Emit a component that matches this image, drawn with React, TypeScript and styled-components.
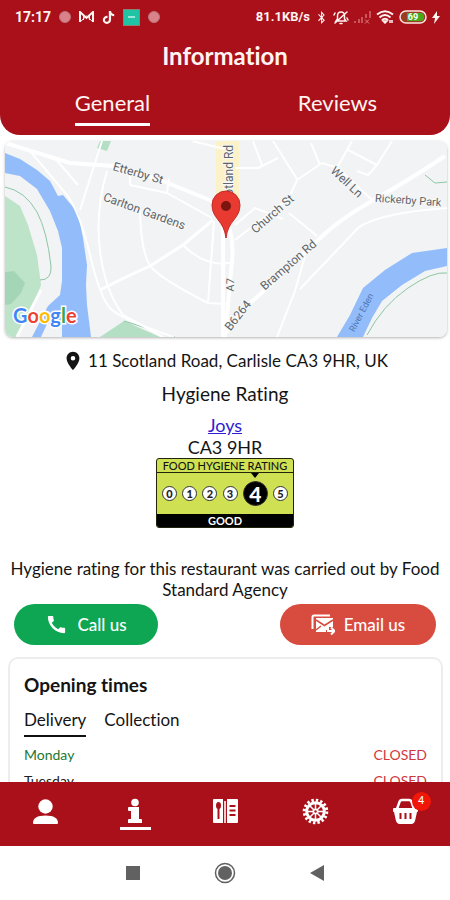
import React, { useState } from "react";
import styled, { createGlobalStyle } from "styled-components";
import { FaBluetoothB, FaTiktok } from "react-icons/fa";
import { MdCall, MdLocationOn } from "react-icons/md";

const GlobalStyle = createGlobalStyle`
  * { box-sizing: border-box; }
  body { margin: 0; background: #fff; color: #141414; font-family: Lato, "Open Sans", sans-serif; font-variant-ligatures: none; }
  button { font: inherit; font-variant-ligatures: none; color: inherit; background: none; border: 0; padding: 0; cursor: pointer; }
`;

const red = "#a91019";

const Screen = styled.div`
  display: flex;
  flex-direction: column;
  height: 100vh;
  overflow: hidden;
`;

const Header = styled.header`
  flex: none;
  background: ${red};
  color: #fff4f2;
  border-radius: 0 0 20px 20px;
  padding-bottom: 9px;
`;

const StatusBar = styled.div`
  display: flex;
  align-items: center;
  justify-content: space-between;
  height: 34px;
  padding: 0 10px 0 15px;
  font: 700 13px/16px Roboto, sans-serif;
`;

const StatusGroup = styled.div<{ $gap: number }>`
  display: flex;
  align-items: center;
  gap: ${(p) => p.$gap}px;
  svg { display: block; flex: none; }
`;

const Clock = styled.time`
  font-size: 14px;
`;

const Bubble = styled.span`
  width: 12px;
  height: 12px;
  border-radius: 50%;
  background: #d9828a;
  border: 1px solid #b9767c;
`;

const TealTile = styled.span`
  display: grid;
  place-items: center;
  width: 17px;
  height: 17px;
  background: #1fc4a4;
  border: 1px solid #8b8272;
  &::after { content: ""; width: 7px; height: 2px; background: #9be8d8; }
`;

const Title = styled.h1`
  margin: 7px 0 0;
  text-align: center;
  font-size: 24px;
  line-height: 30px;
  font-weight: 700;
`;

const HeaderTabs = styled.div`
  display: grid;
  grid-template-columns: 1fr 1fr;
  justify-items: center;
  margin-top: 18px;
`;

const HeaderTab = styled.button<{ $active: boolean }>`
  font-size: 22px;
  line-height: 28px;
  padding-bottom: 6px;
  border-bottom: 3px solid ${(p) => (p.$active ? "#fff" : "transparent")};
`;

const Content = styled.main`
  flex: 1;
  min-height: 0;
  overflow-y: auto;
  scrollbar-width: none;
  padding-top: 6px;
`;

const MapCard = styled.div`
  margin: 0 3px 0 5px;
  height: 196px;
  border-radius: 8px;
  overflow: hidden;
  box-shadow: 0 1px 3px rgba(0, 0, 0, 0.3);
  svg { display: block; width: 100%; height: 100%; }
`;

const Address = styled.p`
  display: flex;
  align-items: center;
  justify-content: center;
  gap: 4px;
  margin: 13px 0 0;
  font-size: 17px;
  line-height: 22px;
`;

const Hygiene = styled.section`
  text-align: center;
  font-size: 18px;
  line-height: 22px;
`;

const HygieneTitle = styled.h2`
  margin: 11px 0 9px;
  font-size: 19px;
  line-height: 22px;
  font-weight: 400;
`;

const PlaceLink = styled.a`
  display: block;
  color: #2d1ed2;
`;

const Rating = styled.div`
  width: 138px;
  margin: 0 auto;
  background: #cfe153;
  border: 1px solid #20240a;
  border-radius: 3px;
  overflow: hidden;
`;

const RatingHead = styled.div`
  height: 14px;
  border-bottom: 1px solid #20240a;
  font: 500 11px/14px Lato, sans-serif;
  white-space: nowrap;
`;

const RatingScale = styled.ol`
  display: flex;
  align-items: center;
  justify-content: space-between;
  margin: 0;
  padding: 0 5px;
  height: 41px;
  list-style: none;
`;

const Score = styled.li<{ $active: boolean }>`
  position: relative;
  display: grid;
  place-items: center;
  width: ${(p) => (p.$active ? 25 : 15)}px;
  height: ${(p) => (p.$active ? 25 : 15)}px;
  border-radius: 50%;
  border: 1px solid #333;
  background: ${(p) => (p.$active ? "#000" : "#fff")};
  color: ${(p) => (p.$active ? "#fff" : "#222")};
  font: 900 ${(p) => (p.$active ? 21 : 11)}px/1 Lato, sans-serif;
`;

const Pointer = styled.span`
  position: absolute;
  top: -9px;
  left: 50%;
  margin-left: -4px;
  border: 4px solid transparent;
  border-top: 5px solid #000;
  border-bottom: 0;
`;

const RatingFoot = styled.div`
  background: #000;
  color: #fff;
  font: 700 11px/13px Lato, sans-serif;
`;

const Note = styled.p`
  margin: 30px 8px 4px;
  font-size: 17px;
  line-height: 21px;
  text-align: center;
`;

const Actions = styled.div`
  display: flex;
  justify-content: space-between;
  padding: 0 14px;
`;

const ActionButton = styled.button<{ $tone: string; $wide?: boolean }>`
  && {
    display: flex;
    align-items: center;
    justify-content: center;
    gap: 9px;
    width: ${(p) => (p.$wide ? 156 : 144)}px;
    height: 41px;
    border-radius: 21px;
    background: ${(p) => p.$tone};
    color: #fff;
    font-size: 17px;
    font-weight: 500;
  }
`;

const TimesCard = styled.section`
  margin: 12px 7px 12px 8px;
  padding: 14px 14px 10px;
  border: 2px solid #ededed;
  border-radius: 10px;
`;

const TimesTitle = styled.h2`
  margin: 0;
  font-size: 19px;
  line-height: 24px;
  font-weight: 700;
`;

const TimesTabs = styled.div`
  display: flex;
  gap: 18px;
  margin: 13px 0 5px;
`;

const TimesTab = styled.button<{ $active: boolean }>`
  font-size: 17px;
  line-height: 20px;
  padding-bottom: 5px;
  border-bottom: 2px solid ${(p) => (p.$active ? "#111" : "transparent")};
`;

const Hours = styled.table`
  width: 100%;
  border-collapse: collapse;
  font-size: 14px;
  line-height: 20px;
`;

const Day = styled.th<{ $today: boolean }>`
  padding: 3px 0;
  text-align: left;
  font-weight: 400;
  color: ${(p) => (p.$today ? "#23772f" : "#222")};
`;

const State = styled.td`
  padding: 3px 0;
  text-align: right;
  color: #d0383c;
`;

const BottomNav = styled.nav`
  flex: none;
  display: grid;
  grid-template-columns: repeat(5, 1fr);
  justify-items: center;
  align-items: start;
  height: 64px;
  padding-top: 14px;
  background: ${red};
  color: #fff;
`;

const NavButton = styled.button<{ $active?: boolean }>`
  position: relative;
  width: 31px;
  height: 34px;
  border-bottom: 3px solid ${(p) => (p.$active ? "#fff" : "transparent")};
  svg { display: block; margin: 0 auto; }
`;

const Count = styled.span`
  position: absolute;
  top: -4px;
  right: -10px;
  width: 19px;
  height: 19px;
  border-radius: 50%;
  background: #f01709;
  color: #fff;
  font: 400 11px/18px Roboto, sans-serif;
  text-align: center;
`;

const SystemNav = styled.div`
  flex: none;
  display: flex;
  justify-content: center;
  align-items: center;
  gap: 74px;
  height: 54px;
  background: #fff;
  color: #616161;
  button, svg { display: block; }
`;

const MapDrawing = () => (
  <svg viewBox="0 0 442 196" preserveAspectRatio="xMidYMid slice" role="img" aria-label="Map of Scotland Road, Carlisle">
    <rect width="442" height="196" fill="#f1f3f4" />
    <path d="M0 55 15 65 23 84 32 114 36 144 28 167 12 196H0Z" fill="#bde4c9" />
    <path d="M0 131 9 130 20 142 16 152 6 163 0 164Z" fill="#a5d5b7" />
    <path d="M95 0H106L102 10 92 7ZM95 196 119 180 155 196Z" fill="#b5dfc4" />
    <path d="M0 12 15 18 32 29 45 40 53 55 58 54 73 72 78 97 82 124 81 144 82 164 86 196H57V180L42 183 36 196H27L43 165 55 154 57 140V107L53 90 45 70 32 48 15 35 0 32Z" fill="#93bcfb" />
    <path d="M332 196 345 174 358 147 380 129 407 112 442 107V125L420 130 397 144 377 160 367 177 358 196Z" fill="#93bcfb" />
    <g fill="none" stroke="#8cc6a5" strokeWidth="1">
      <path d="M0 46Q20 50 32 71Q42 90 46 125Q47 139 35 139" />
      <path d="M362 194Q378 164 403 147T442 132M420 34 430 42 442 41M119 180 170 196" />
    </g>
    <path d="M211 0H234V62H211Z" fill="#fbf2c9" />
    <g fill="none" stroke="#fff" strokeWidth="4" strokeLinejoin="round">
      <path d="M0 2 65 22 108 25 158 40 207 60 218 78V196" />
      <path d="M220 77Q231 97 226 130L223 164 220 196" />
      <path d="M217 196 243 164 270 140 312 100Q333 79 367 60T440 15" />
      <path d="M95 149Q120 136 145 125L178 104 208 79" strokeWidth="3" />
      <path d="M36 149 12 196" strokeWidth="3" />
    </g>
    <g fill="none" stroke="#fff" strokeWidth="2" strokeLinejoin="round">
      <path d="M25 10 62 54Q75 72 85 114T105 167 169 196M102 30Q90 70 95 110T118 174L158 196M97 0 75 69M48 15 73 44M125 44 162 52 207 77M125 44V35M162 52 164 38" />
      <path d="M135 69Q136 115 147 127T203 162L221 163M178 104Q196 123 221 123M209 80 203 162M187 0 220 8" />
      <path d="M230 99 284 57 292 39 317 22 333 27 367 59M230 27H253L273 17M268 0 292 38M248 0 257 24M306 2 315 24M347 0 333 25M343 9 372 24 387 0M352 30 363 34 372 24M284 72 312 95M230 84 250 67 278 78M272 196 290 150 300 115M295 148 353 87Q373 72 442 67M220 122H228" />
    </g>
    <g fontFamily="Roboto, sans-serif" fontSize="12" fill="#60656a" textAnchor="middle" stroke="#f7f8f8" strokeWidth="2" paintOrder="stroke">
      <text transform="translate(132 36) rotate(16)">Etterby St</text>
      <text transform="translate(138 74) rotate(20)">Carlton Gardens</text>
      <text transform="translate(270 76) rotate(-41)">Church St</text>
      <text transform="translate(339 44) rotate(43)">Well Ln</text>
      <text transform="translate(403 63) rotate(4)" fontSize="11">Rickerby Park</text>
      <text transform="translate(286 127) rotate(-41)">Brampton Rd</text>
      <text transform="translate(229 144) rotate(-87)" fontSize="11">A7</text>
      <text transform="translate(236 177) rotate(-52)">B6264</text>
      <text transform="translate(228 36) rotate(-90)">Scotland Rd</text>
      <text transform="translate(359 173) rotate(-62)" fontSize="9" fill="#4d78b4" stroke="none">River Eden</text>
    </g>
    <path d="M221 97C219 79 207 78 207 64A14 14 0 0 1 235 64C235 78 223 79 221 97Z" fill="#e93a32" stroke="#c42a24" strokeWidth="1" />
    <circle cx="221" cy="65" r="5" fill="#7a1510" />
    <text x="8" y="182" fontFamily="Lato, sans-serif" fontSize="20" fontWeight="700" stroke="#fff" strokeWidth="3" paintOrder="stroke">
      <tspan fill="#4285f4">G</tspan><tspan fill="#ea4335">o</tspan><tspan fill="#fbbc05">o</tspan><tspan fill="#4285f4">g</tspan><tspan fill="#34a853">l</tspan><tspan fill="#ea4335">e</tspan>
    </text>
  </svg>
);

const MailBadgeIcon = () => (
  <svg width="15" height="12" viewBox="0 0 15 12" fill="none" stroke="currentColor">
    <path d="M1 11V1L7.500 7 14 1V11" strokeWidth="2" />
    <path d="M1 11 7.500 5 14 11M4.500 9V4M10.500 9V4" strokeWidth="1" />
  </svg>
);

const MutedBellIcon = () => (
  <svg width="16" height="15" viewBox="0 0 16 15" fill="none" stroke="currentColor" strokeWidth="1.5" strokeLinecap="round">
    <path d="M3 11H13L11.500 9V6Q11.500 2 8 2T4.500 6V9ZM7 13.500H9M2 13 14 2M2 3 1 5M14 8 15 10" />
  </svg>
);

const SignalIcon = () => (
  <svg width="17" height="13" viewBox="0 0 17 13" fill="#c9545b">
    <path d="M0 10H2V12H0ZM4 8H6V12H4ZM7 6H9V12H7ZM11 3H13V7H11ZM15 0H17V7H15Z" />
    <path d="M11 8.500 15 12.500M15 8.500 11 12.500" stroke="#d98084" />
  </svg>
);

const WifiIcon = () => (
  <svg width="18" height="14" viewBox="0 0 18 14" fill="none" stroke="currentColor" strokeWidth="2">
    <path d="M1 4.500Q9-2 17 4.500M3.500 7.500Q9 2.500 14.500 7.500M6 10Q9 7.500 12 10" />
    <path d="M7 11 9 13 11 11ZM14 10V13M16 10V13" strokeWidth="1.500" />
  </svg>
);

const BatteryIcon = () => (
  <svg width="28" height="14" viewBox="0 0 28 14">
    <rect x="1" y="1" width="26" height="12" rx="6" fill="#9a3d26" stroke="#ffe5df" strokeWidth="1.500" />
    <path d="M8 3H22Q25 3 25 7T22 11H8Z" fill="#4ba81c" />
    <text x="14" y="10" textAnchor="middle" fontFamily="Roboto, sans-serif" fontSize="9" fontWeight="700" fill="#fff">69</text>
  </svg>
);

const BoltIcon = () => (
  <svg width="8" height="13" viewBox="0 0 8 13" fill="currentColor"><path d="M5 0 0 7H3L2 13 8 5H5Z" /></svg>
);

const MailsIcon = () => (
  <svg width="24" height="22" viewBox="0 0 24 22" fill="none">
    <path d="M1.500 15V3Q1.500 1.500 3 1.500H19" stroke="#fff" strokeWidth="2" />
    <path d="M5 4H22V13H18V16H15V18H5Z" fill="#fff" />
    <path d="M5 6 13.500 11.500 22 6M5 16 10 12" stroke="#d84c3f" strokeWidth="1.500" />
    <path d="M16 17H23M20 13.500 23.500 17 20 20.500" stroke="#fff" strokeWidth="2" />
  </svg>
);

const PersonIcon = () => (
  <svg width="27" height="29" viewBox="0 0 27 29" fill="currentColor">
    <circle cx="13.500" cy="9.500" r="7.200" />
    <path d="M1 26Q1 18.500 13.500 18.500T26 26Q26 27 25 27H2Q1 27 1 26Z" />
  </svg>
);

const InfoIcon = () => (
  <svg width="16" height="29" viewBox="0 0 16 29" fill="currentColor">
    <circle cx="8" cy="5.500" r="3.800" />
    <path d="M2 10H12V22H14Q15 22 15 23V26H1V23Q1 22 2 22H4V14H2Q1 14 1 13V11Q1 10 2 10Z" />
  </svg>
);

const MenuIcon = () => (
  <svg width="27" height="29" viewBox="0 0 27 29" fill="none">
    <path d="M2 2H11V26H2Q1 26 1 25V3Q1 2 2 2ZM15 2H25Q26 2 26 3V25Q26 26 25 26H15Z" fill="#fff" />
    <path d="M13 4V26" stroke="#f2c9c9" strokeWidth="2" />
    <ellipse cx="6.500" cy="8.500" rx="2.500" ry="3.500" fill={red} />
    <path d="M6.500 10V22M17.500 9H23.500M17.500 13.500H23.500M17.500 18H23.500" stroke={red} strokeWidth="2" />
  </svg>
);

const GearIcon = () => (
  <svg width="27" height="29" viewBox="0 0 27 29" fill="none" stroke="currentColor">
    <circle cx="13.500" cy="14.500" r="8.800" strokeWidth="3" />
    <circle cx="13.500" cy="14.500" r="11.300" strokeWidth="3" strokeDasharray="2.400 2.037" />
    <path d="M13.500 6V23M5 14.500H22M7.500 8.500 19.500 20.500M19.500 8.500 7.500 20.500" strokeWidth="1.500" />
    <circle cx="13.500" cy="14.500" r="3" fill="currentColor" stroke="none" />
    <circle cx="13.500" cy="14.500" r="1.200" fill={red} stroke="none" />
  </svg>
);

const BasketIcon = () => (
  <svg width="27" height="29" viewBox="0 0 27 29" fill="none">
    <path d="M5 12 7.500 5Q8 3 10 3H17Q19 3 19.500 5L22 12" stroke="#fff" strokeWidth="2.500" />
    <path d="M2 11H25Q26 11 26 12V14Q26 15 25 15L23 24Q22 27 20 27H7Q5 27 4 24L2 15Q1 15 1 14V12Q1 11 2 11Z" fill="#fff" />
    <path d="M8.500 16V22M13.500 16V22M18.500 16V22" stroke={red} strokeWidth="2" />
  </svg>
);

const days = ["Monday", "Tuesday", "Wednesday", "Thursday", "Friday", "Saturday", "Sunday"];

export default function App() {
  const [page, setPage] = useState("General");
  const [service, setService] = useState("Delivery");
  return (
    <Screen>
      <GlobalStyle />
      <Header>
        <StatusBar>
          <StatusGroup $gap={8}>
            <Clock>17:17</Clock>
            <Bubble />
            <MailBadgeIcon />
            <FaTiktok size={13} />
            <TealTile />
            <Bubble />
          </StatusGroup>
          <StatusGroup $gap={5}>
            <span>81.1KB/s</span>
            <FaBluetoothB size={13} />
            <MutedBellIcon />
            <SignalIcon />
            <WifiIcon />
            <BatteryIcon />
            <BoltIcon />
          </StatusGroup>
        </StatusBar>
        <Title>Information</Title>
        <HeaderTabs role="tablist">
          {["General", "Reviews"].map((name) => (
            <HeaderTab key={name} role="tab" aria-selected={page === name} $active={page === name} onClick={() => setPage(name)}>
              {name}
            </HeaderTab>
          ))}
        </HeaderTabs>
      </Header>

      <Content>
        <MapCard><MapDrawing /></MapCard>
        <Address><MdLocationOn size={22} />11 Scotland Road, Carlisle CA3 9HR, UK</Address>
        <Hygiene>
          <HygieneTitle>Hygiene Rating</HygieneTitle>
          <PlaceLink href="#joys">Joys</PlaceLink>
          <div>CA3 9HR</div>
          <Rating>
            <RatingHead>FOOD HYGIENE RATING</RatingHead>
            <RatingScale>
              {[0, 1, 2, 3, 4, 5].map((n) => (
                <Score key={n} $active={n === 4}>{n === 4 && <Pointer />}{n}</Score>
              ))}
            </RatingScale>
            <RatingFoot>GOOD</RatingFoot>
          </Rating>
        </Hygiene>
        <Note>Hygiene rating for this restaurant was carried out by Food Standard Agency</Note>
        <Actions>
          <ActionButton $tone="#0fa653"><MdCall size={23} />Call us</ActionButton>
          <ActionButton $tone="#d84c3f" $wide><MailsIcon />Email us</ActionButton>
        </Actions>
        <TimesCard>
          <TimesTitle>Opening times</TimesTitle>
          <TimesTabs role="tablist">
            {["Delivery", "Collection"].map((name) => (
              <TimesTab key={name} role="tab" aria-selected={service === name} $active={service === name} onClick={() => setService(name)}>
                {name}
              </TimesTab>
            ))}
          </TimesTabs>
          <Hours>
            <tbody>
              {days.map((day, i) => (
                <tr key={day}>
                  <Day scope="row" $today={i === 0}>{day}</Day>
                  <State>CLOSED</State>
                </tr>
              ))}
            </tbody>
          </Hours>
        </TimesCard>
      </Content>

      <BottomNav>
        <NavButton aria-label="Account"><PersonIcon /></NavButton>
        <NavButton aria-label="Information" $active><InfoIcon /></NavButton>
        <NavButton aria-label="Menu"><MenuIcon /></NavButton>
        <NavButton aria-label="Settings"><GearIcon /></NavButton>
        <NavButton aria-label="Basket"><BasketIcon /><Count>4</Count></NavButton>
      </BottomNav>
      <SystemNav>
        <button aria-label="Recent apps">
          <svg width="14" height="14" viewBox="0 0 14 14"><path d="M0 0H14V14H0Z" fill="currentColor" /></svg>
        </button>
        <button aria-label="Home">
          <svg width="22" height="22" viewBox="0 0 22 22">
            <circle cx="11" cy="11" r="9.500" fill="none" stroke="currentColor" strokeWidth="1.500" />
            <circle cx="11" cy="11" r="7" fill="currentColor" />
          </svg>
        </button>
        <button aria-label="Back">
          <svg width="14" height="16" viewBox="0 0 14 16"><path d="M14 0V16L0 8Z" fill="currentColor" /></svg>
        </button>
      </SystemNav>
    </Screen>
  );
}
